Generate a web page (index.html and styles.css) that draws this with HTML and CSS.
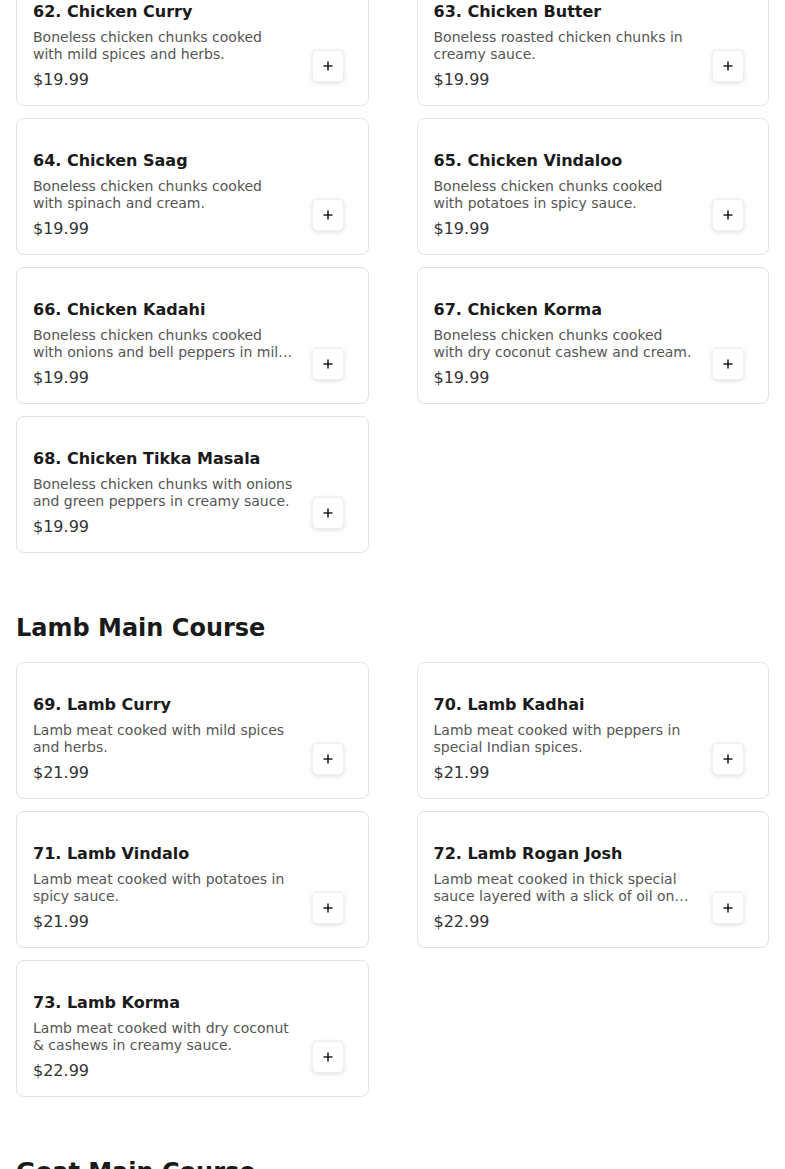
FILE: index.html
```html
<!DOCTYPE html>
<html lang="en">
<head>
<meta charset="utf-8">
<title>Menu</title>
<link rel="stylesheet" href="styles.css">
</head>
<body>
<main class="menu">
  <section class="section section-first">
    <div class="grid">
      <div class="card"><div class="info"><h3 class="title">62. Chicken Curry</h3><p class="desc">Boneless chicken chunks cooked with mild spices and herbs.</p><div class="price">$19.99</div></div><button class="add" aria-label="Add"><svg viewBox="0 0 12 12" width="12" height="12"><path d="M6 1.5v9M1.5 6h9" stroke="#222" stroke-width="1.6" fill="none"/></svg></button></div>
      <div class="card"><div class="info"><h3 class="title">63. Chicken Butter</h3><p class="desc">Boneless roasted chicken chunks in creamy sauce.</p><div class="price">$19.99</div></div><button class="add" aria-label="Add"><svg viewBox="0 0 12 12" width="12" height="12"><path d="M6 1.5v9M1.5 6h9" stroke="#222" stroke-width="1.6" fill="none"/></svg></button></div>
      <div class="card"><div class="info"><h3 class="title">64. Chicken Saag</h3><p class="desc">Boneless chicken chunks cooked with spinach and cream.</p><div class="price">$19.99</div></div><button class="add" aria-label="Add"><svg viewBox="0 0 12 12" width="12" height="12"><path d="M6 1.5v9M1.5 6h9" stroke="#222" stroke-width="1.6" fill="none"/></svg></button></div>
      <div class="card"><div class="info"><h3 class="title">65. Chicken Vindaloo</h3><p class="desc">Boneless chicken chunks cooked with potatoes in spicy sauce.</p><div class="price">$19.99</div></div><button class="add" aria-label="Add"><svg viewBox="0 0 12 12" width="12" height="12"><path d="M6 1.5v9M1.5 6h9" stroke="#222" stroke-width="1.6" fill="none"/></svg></button></div>
      <div class="card"><div class="info"><h3 class="title">66. Chicken Kadahi</h3><p class="desc">Boneless chicken chunks cooked with onions and bell peppers in mild spices and herbs.</p><div class="price">$19.99</div></div><button class="add" aria-label="Add"><svg viewBox="0 0 12 12" width="12" height="12"><path d="M6 1.5v9M1.5 6h9" stroke="#222" stroke-width="1.6" fill="none"/></svg></button></div>
      <div class="card"><div class="info"><h3 class="title">67. Chicken Korma</h3><p class="desc">Boneless chicken chunks cooked with dry coconut cashew and cream.</p><div class="price">$19.99</div></div><button class="add" aria-label="Add"><svg viewBox="0 0 12 12" width="12" height="12"><path d="M6 1.5v9M1.5 6h9" stroke="#222" stroke-width="1.6" fill="none"/></svg></button></div>
      <div class="card"><div class="info"><h3 class="title">68. Chicken Tikka Masala</h3><p class="desc">Boneless chicken chunks with onions and green peppers in creamy sauce.</p><div class="price">$19.99</div></div><button class="add" aria-label="Add"><svg viewBox="0 0 12 12" width="12" height="12"><path d="M6 1.5v9M1.5 6h9" stroke="#222" stroke-width="1.6" fill="none"/></svg></button></div>
    </div>
  </section>

  <section class="section">
    <h2 class="section-title">Lamb Main Course</h2>
    <div class="grid">
      <div class="card"><div class="info"><h3 class="title">69. Lamb Curry</h3><p class="desc">Lamb meat cooked with mild spices and herbs.</p><div class="price">$21.99</div></div><button class="add" aria-label="Add"><svg viewBox="0 0 12 12" width="12" height="12"><path d="M6 1.5v9M1.5 6h9" stroke="#222" stroke-width="1.6" fill="none"/></svg></button></div>
      <div class="card"><div class="info"><h3 class="title">70. Lamb Kadhai</h3><p class="desc">Lamb meat cooked with peppers in special Indian spices.</p><div class="price">$21.99</div></div><button class="add" aria-label="Add"><svg viewBox="0 0 12 12" width="12" height="12"><path d="M6 1.5v9M1.5 6h9" stroke="#222" stroke-width="1.6" fill="none"/></svg></button></div>
      <div class="card"><div class="info"><h3 class="title">71. Lamb Vindalo</h3><p class="desc">Lamb meat cooked with potatoes in spicy sauce.</p><div class="price">$21.99</div></div><button class="add" aria-label="Add"><svg viewBox="0 0 12 12" width="12" height="12"><path d="M6 1.5v9M1.5 6h9" stroke="#222" stroke-width="1.6" fill="none"/></svg></button></div>
      <div class="card"><div class="info"><h3 class="title">72. Lamb Rogan Josh</h3><p class="desc">Lamb meat cooked in thick special sauce layered with a slick of oil on top.</p><div class="price">$22.99</div></div><button class="add" aria-label="Add"><svg viewBox="0 0 12 12" width="12" height="12"><path d="M6 1.5v9M1.5 6h9" stroke="#222" stroke-width="1.6" fill="none"/></svg></button></div>
      <div class="card"><div class="info"><h3 class="title">73. Lamb Korma</h3><p class="desc">Lamb meat cooked with dry coconut &amp; cashews in creamy sauce.</p><div class="price">$22.99</div></div><button class="add" aria-label="Add"><svg viewBox="0 0 12 12" width="12" height="12"><path d="M6 1.5v9M1.5 6h9" stroke="#222" stroke-width="1.6" fill="none"/></svg></button></div>
    </div>
  </section>

  <section class="section">
    <h2 class="section-title">Goat Main Course</h2>
  </section>
</main>
</body>
</html>
```

FILE: styles.css
```css
* { box-sizing: border-box; }

html, body {
  margin: 0;
  padding: 0;
  background: #ffffff;
}

body {
  font-family: "DejaVu Sans", "Liberation Sans", sans-serif;
  color: #1a1a1a;
  overflow: hidden;
}

.menu {
  padding: 0 16px;
  margin-top: -31px;
}

.section {
  margin-top: 59px;
}

.section-first {
  margin-top: 0;
}

.section-title {
  margin: 0 0 18px;
  font-size: 24px;
  line-height: 32px;
  font-weight: 700;
  color: #1a1a1a;
}

.grid {
  display: grid;
  grid-template-columns: 1fr 1fr;
  column-gap: 48px;
  row-gap: 12px;
}

.card {
  display: flex;
  gap: 16px;
  border: 1px solid #e3e3e3;
  border-radius: 8px;
  padding: 32px 24px 16px 16px;
  background: #fff;
}

.info {
  flex: 1;
  min-width: 0;
}

.title {
  margin: 0;
  font-size: 16px;
  line-height: 19px;
  font-weight: 700;
  color: #1a1a1a;
}

.desc {
  margin: 8px 0 0;
  font-size: 14px;
  line-height: 17px;
  color: #555555;
  display: -webkit-box;
  -webkit-line-clamp: 2;
  -webkit-box-orient: vertical;
  overflow: hidden;
  height: 34px;
}

.price {
  margin-top: 7px;
  font-size: 16px;
  line-height: 19px;
  color: #333333;
}

.add {
  align-self: flex-end;
  margin-bottom: 7px;
  flex: none;
  width: 32px;
  height: 32px;
  padding: 0;
  border: 1px solid #efefef;
  border-radius: 5px;
  background: #fff;
  box-shadow: 0 1px 4px rgba(0, 0, 0, 0.14);
  display: flex;
  align-items: center;
  justify-content: center;
  cursor: pointer;
}

.add svg {
  display: block;
}
```
